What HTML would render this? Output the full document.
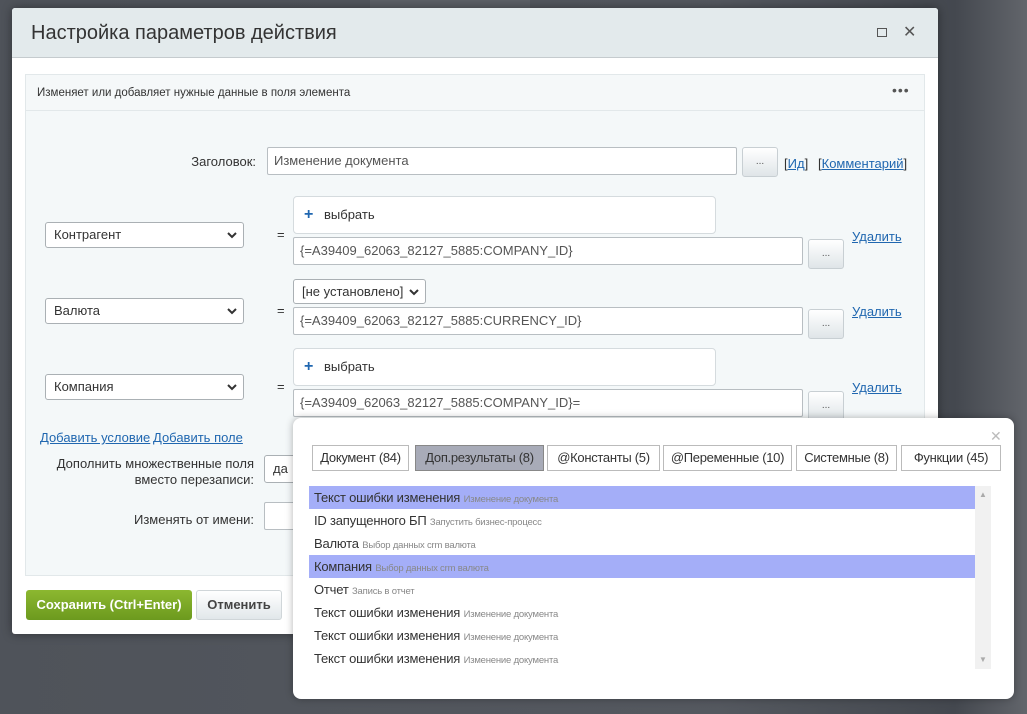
<!DOCTYPE html>
<html><head><meta charset="utf-8"><style>
*{box-sizing:border-box;margin:0;padding:0}
body{width:1027px;height:714px;overflow:hidden;position:relative;font-family:"Liberation Sans",sans-serif;background:linear-gradient(90deg,#4f535a 0%,#54585f 70%,#44484f 93%,#62656b 100%);color:#333}
.a{position:absolute}
.dlg{left:12px;top:8px;width:926px;height:626px;background:#fff;border-radius:3px;box-shadow:0 0 10px rgba(0,0,0,.4)}
.hd{left:12px;top:8px;width:926px;height:50px;background:#e3eaec;border-bottom:1px solid #c5cbce;border-radius:3px 3px 0 0}
.panel{left:25px;top:74px;width:900px;height:502px;background:#f4f8f9;border:1px solid #e2e8ea}
.inp{background:#fff;border:1px solid #b8bec2;border-radius:2px;font-size:13px;color:#555;padding:0 6px;line-height:26px}
.sel{background:#fff;border:1px solid #aab0b4;border-radius:3px;font-size:13px;color:#333;padding:0 8px;line-height:24px}
.sel svg{position:absolute;right:6px;top:8px}
.btn{background:linear-gradient(#fff,#dfe5e8);border:1px solid #c8cfd3;border-radius:3px;font-size:10px;text-align:center;color:#555;line-height:24px}
.lnk{color:#2067b0;text-decoration:underline;font-size:13px}
.lbl{font-size:13px;color:#333;text-align:right}
.box{background:#fff;border:1px solid #d5dbde;border-radius:4px;font-size:13px;color:#333;padding-left:30px;line-height:36px}
.box b{position:absolute;left:10px;top:0;color:#2067b0;font-size:16px}
.tab{top:445px;height:26px;border:1px solid #bbb;background:#fff;font-size:13px;color:#333;text-align:center;line-height:24px;letter-spacing:-.3px}
.row{position:absolute;left:309px;width:666px;height:23px;font-size:13px;color:#333;padding-left:5px;line-height:23px;letter-spacing:-.2px}
.row i{font-style:normal;font-size:9.5px;color:#888}
.hl{background:#a4aef8}
</style></head><body>
<div class="a" style="left:370px;top:0;width:160px;height:8px;background:#5c6066"></div>
<div class="a dlg"></div>
<div class="a hd"></div>
<div class="a" style="left:31px;top:22px;font-size:20px;color:#333">Настройка параметров действия</div>
<div class="a" style="left:877px;top:28px;width:10px;height:9px;border:1.5px solid #555"></div>
<div class="a" style="left:903px;top:22px;font-size:16px;color:#555">✕</div>
<div class="a panel"></div>
<div class="a" style="left:26px;top:75px;width:898px;height:36px;border-bottom:1px solid #e2e8ea;background:#f5f8f9"></div>
<div class="a" style="left:37px;top:87px;font-size:11.5px;color:#333">Изменяет или добавляет нужные данные в поля элемента</div>
<div class="a" style="left:892px;top:82px;font-size:14px;color:#555;letter-spacing:1px">•••</div>

<div class="a lbl" style="left:150px;top:154px;width:106px">Заголовок:</div>
<div class="a inp" style="left:267px;top:147px;width:470px;height:28px">Изменение документа</div>
<div class="a btn" style="left:742px;top:147px;width:36px;height:30px;line-height:28px">...</div>
<div class="a" style="left:784px;top:156px;font-size:13px">[<span class="lnk">Ид</span>]</div>
<div class="a" style="left:818px;top:156px;font-size:13px">[<span class="lnk">Комментарий</span>]</div>

<div class="a sel" style="left:45px;top:222px;width:199px;height:26px">Контрагент<svg width="10" height="8" viewBox="0 0 10 8"><path d="M1 2l4 4 4-4" stroke="#333" stroke-width="2" fill="none"/></svg></div>
<div class="a" style="left:277px;top:227px;font-size:13px">=</div>
<div class="a box" style="left:293px;top:196px;width:423px;height:38px"><b>+</b>выбрать</div>
<div class="a inp" style="left:293px;top:237px;width:510px;height:28px">{=A39409_62063_82127_5885:COMPANY_ID}</div>
<div class="a btn" style="left:808px;top:239px;width:36px;height:30px;line-height:28px">...</div>
<div class="a lnk" style="left:852px;top:229px">Удалить</div>

<div class="a sel" style="left:45px;top:298px;width:199px;height:26px">Валюта<svg width="10" height="8" viewBox="0 0 10 8"><path d="M1 2l4 4 4-4" stroke="#333" stroke-width="2" fill="none"/></svg></div>
<div class="a" style="left:277px;top:303px;font-size:13px">=</div>
<div class="a sel" style="left:293px;top:279px;width:133px;height:25px;padding-left:8px">[не установлено]<svg width="10" height="8" viewBox="0 0 10 8"><path d="M1 2l4 4 4-4" stroke="#333" stroke-width="2" fill="none"/></svg></div>
<div class="a inp" style="left:293px;top:307px;width:510px;height:28px">{=A39409_62063_82127_5885:CURRENCY_ID}</div>
<div class="a btn" style="left:808px;top:309px;width:36px;height:30px;line-height:28px">...</div>
<div class="a lnk" style="left:852px;top:304px">Удалить</div>

<div class="a sel" style="left:45px;top:374px;width:199px;height:26px">Компания<svg width="10" height="8" viewBox="0 0 10 8"><path d="M1 2l4 4 4-4" stroke="#333" stroke-width="2" fill="none"/></svg></div>
<div class="a" style="left:277px;top:379px;font-size:13px">=</div>
<div class="a box" style="left:293px;top:348px;width:423px;height:38px"><b>+</b>выбрать</div>
<div class="a inp" style="left:293px;top:389px;width:510px;height:28px">{=A39409_62063_82127_5885:COMPANY_ID}=</div>
<div class="a btn" style="left:808px;top:391px;width:36px;height:30px;line-height:28px">...</div>
<div class="a lnk" style="left:852px;top:380px">Удалить</div>

<div class="a lnk" style="left:40px;top:430px">Добавить условие</div>
<div class="a lnk" style="left:153px;top:430px">Добавить поле</div>
<div class="a lbl" style="left:30px;top:456px;width:224px;line-height:16px">Дополнить множественные поля<br>вместо перезаписи:</div>
<div class="a sel" style="left:264px;top:455px;width:60px;height:28px;line-height:26px">да</div>
<div class="a lbl" style="left:30px;top:512px;width:224px">Изменять от имени:</div>
<div class="a inp" style="left:264px;top:502px;width:60px;height:28px"></div>

<div class="a" style="left:26px;top:590px;width:166px;height:30px;background:linear-gradient(#8cb830,#6c9a1e);border-radius:3px;color:#fff;font-size:13px;font-weight:bold;text-align:center;line-height:30px">Сохранить (Ctrl+Enter)</div>
<div class="a" style="left:196px;top:590px;width:86px;height:30px;background:linear-gradient(#fff,#e1e7ea);border:1px solid #d0d6d9;border-radius:3px;color:#444;font-size:13px;font-weight:bold;text-align:center;line-height:28px">Отменить</div>

<div class="a" style="left:293px;top:418px;width:721px;height:281px;background:#fff;border-radius:8px;box-shadow:0 0 8px rgba(0,0,0,.3)"></div>
<div class="a" style="left:990px;top:428px;font-size:14px;color:#bbb">✕</div>
<div class="a tab" style="left:312px;width:97px">Документ (84)</div>
<div class="a tab" style="left:415px;width:129px;background:#a8abb8;border-color:#888">Доп.результаты (8)</div>
<div class="a tab" style="left:547px;width:113px">@Константы (5)</div>
<div class="a tab" style="left:663px;width:129px">@Переменные (10)</div>
<div class="a tab" style="left:796px;width:101px">Системные (8)</div>
<div class="a tab" style="left:901px;width:100px">Функции (45)</div>
<div class="a" style="left:975px;top:486px;width:16px;height:183px;background:#f1f1f1"></div>
<div class="a" style="left:979px;top:490px;font-size:8px;color:#aaa">▲</div>
<div class="a" style="left:979px;top:655px;font-size:8px;color:#aaa">▼</div>
<div class="row hl" style="top:486px">Текст ошибки изменения <i>Изменение документа</i></div>
<div class="row" style="top:509px">ID запущенного БП <i>Запустить бизнес-процесс</i></div>
<div class="row" style="top:532px">Валюта <i>Выбор данных crm валюта</i></div>
<div class="row hl" style="top:555px">Компания <i>Выбор данных crm валюта</i></div>
<div class="row" style="top:578px">Отчет <i>Запись в отчет</i></div>
<div class="row" style="top:601px">Текст ошибки изменения <i>Изменение документа</i></div>
<div class="row" style="top:624px">Текст ошибки изменения <i>Изменение документа</i></div>
<div class="row" style="top:647px">Текст ошибки изменения <i>Изменение документа</i></div>
</body></html>
